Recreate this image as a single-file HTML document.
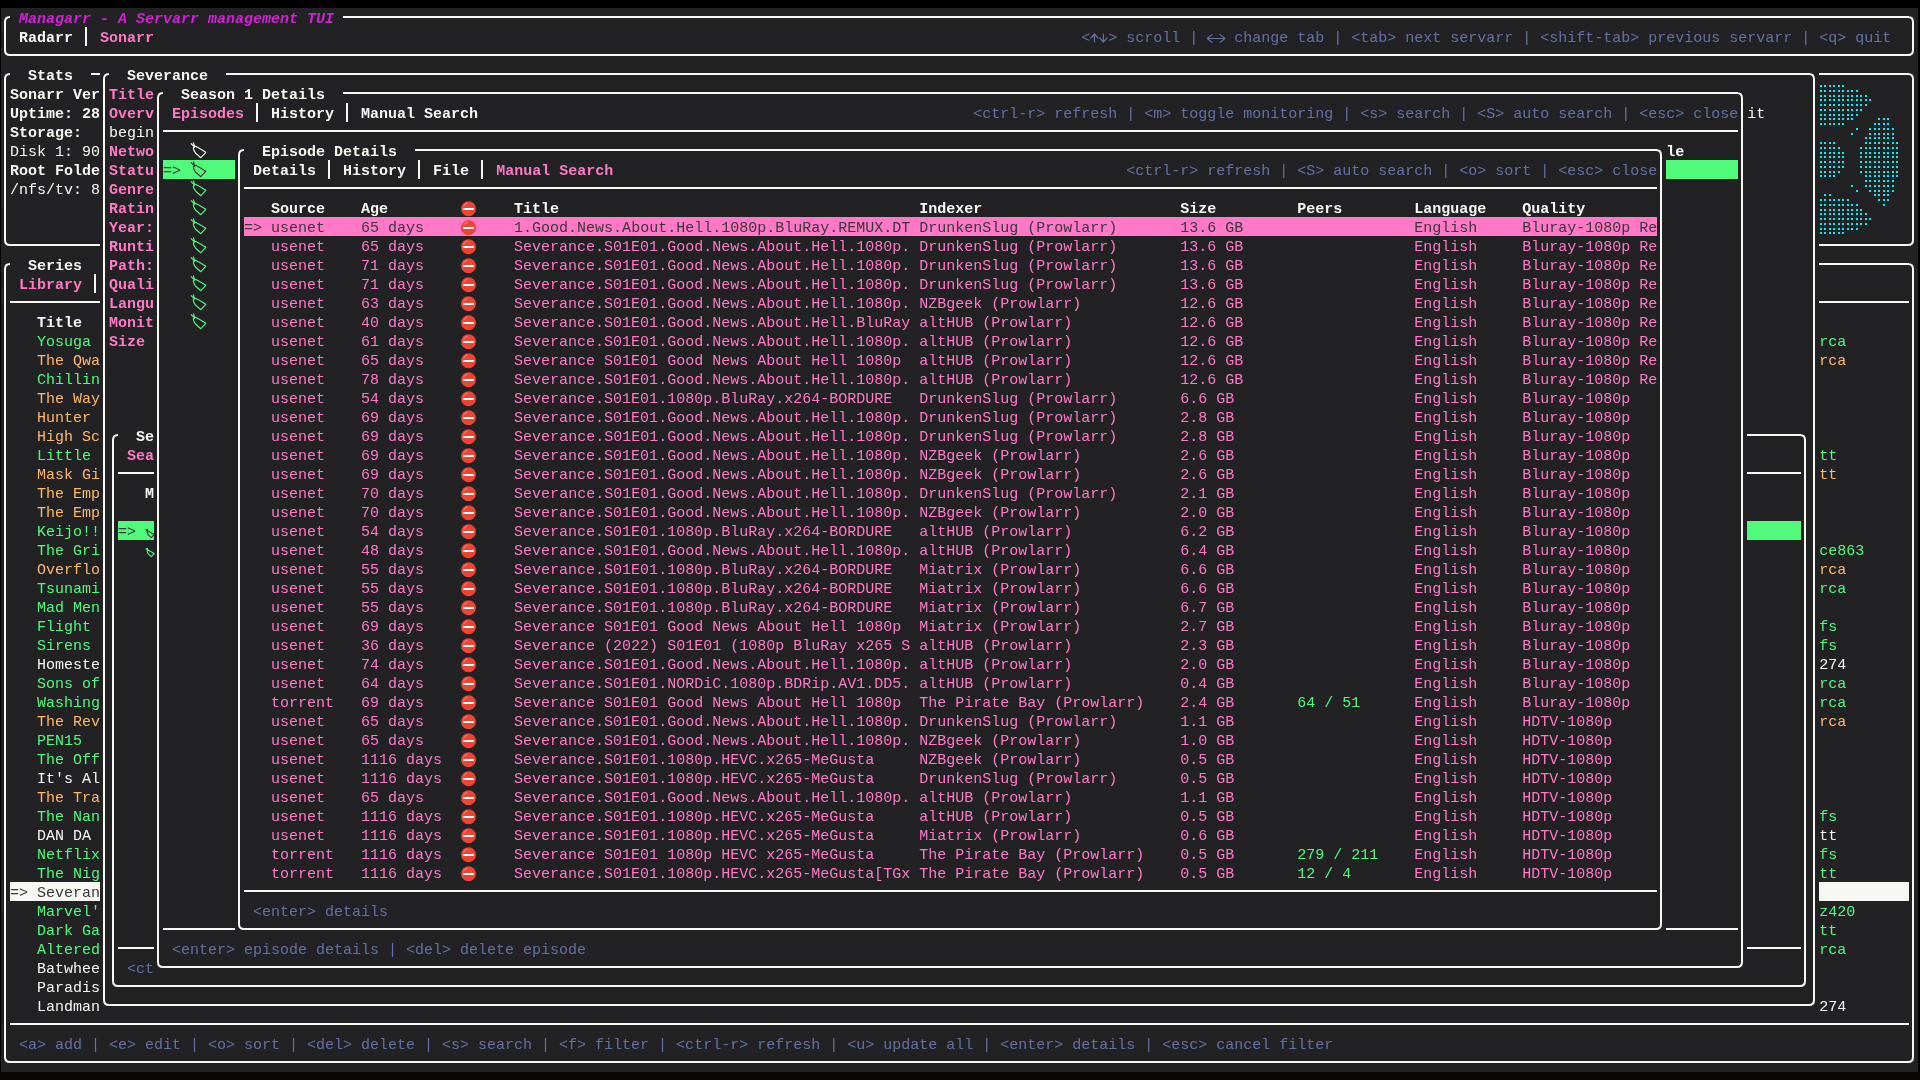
<!DOCTYPE html><html><head><meta charset="utf-8"><style>
html,body{margin:0;padding:0;}body{width:1920px;height:1080px;background:#000;position:relative;overflow:hidden;}
#t{position:absolute;left:1px;top:8px;width:1917px;height:1064px;background:#222225;}
.r{will-change:transform;position:absolute;left:1px;height:19px;font-family:"Liberation Mono",monospace;font-size:15px;line-height:19px;white-space:pre;}
.b{font-weight:bold}.i{font-style:italic}
.bg{position:absolute;height:19px}
svg{position:absolute;left:0;top:0}
#bs{position:absolute;left:0;top:1072px;width:1920px;height:8px;background:#0c0707}
</style></head><body><div id="bs"></div><div id="t"></div>
<div class="bg" style="left:163px;top:160px;width:72px;background:#50fa7b"></div>
<div class="bg" style="left:1666px;top:160px;width:72px;background:#50fa7b"></div>
<div class="bg" style="left:244px;top:217px;width:1413px;background:#ff79c6"></div>
<div class="bg" style="left:118px;top:521px;width:36px;background:#50fa7b"></div>
<div class="bg" style="left:1747px;top:521px;width:54px;background:#50fa7b"></div>
<div class="bg" style="left:10px;top:882px;width:90px;background:#f8f8f2"></div>
<div class="bg" style="left:1819px;top:882px;width:90px;background:#f8f8f2"></div>
<div class="r" style="top:10px">  <span class="b i" style="color:#d41ed8">Managarr - A Servarr management TUI                                                                                                                                                                                </span></div>
<div class="r" style="top:29px">  <span class="b" style="color:#f8f8f2">Radarr   </span><span class="b" style="color:#ff79c6">Sonarr                                                                                                       </span><span style="color:#6272a4">&lt;  &gt; scroll |    change tab | &lt;tab&gt; next servarr | &lt;shift-tab&gt; previous servarr | &lt;q&gt; quit   </span></div>
<div class="r" style="top:67px">   <span class="b" style="color:#f8f8f2">Stats      Severance                                                                                                                                                                                              </span></div>
<div class="r" style="top:86px"> <span class="b" style="color:#f8f8f2">Sonarr Ver </span><span class="b" style="color:#ff79c6">Title   </span><span class="b" style="color:#f8f8f2">Season 1 Details                                                                                                                                                                                 </span></div>
<div class="r" style="top:105px"> <span class="b" style="color:#f8f8f2">Uptime: 28 </span><span class="b" style="color:#ff79c6">Overv  Episodes   </span><span class="b" style="color:#f8f8f2">History   Manual Search                                                       </span><span style="color:#6272a4">&lt;ctrl-r&gt; refresh | &lt;m&gt; toggle monitoring | &lt;s&gt; search | &lt;S&gt; auto search | &lt;esc&gt; close </span><span style="color:#f8f8f2">it                 </span></div>
<div class="r" style="top:124px"> <span class="b" style="color:#f8f8f2">Storage:   </span><span style="color:#f8f8f2">begin                                                                                                                                                                                                    </span></div>
<div class="r" style="top:143px"> <span style="color:#f8f8f2">Disk 1: 90 </span><span class="b" style="color:#ff79c6">Netwo            </span><span class="b" style="color:#f8f8f2">Episode Details                                                                                                                                             le                          </span></div>
<div class="r" style="top:162px"> <span class="b" style="color:#f8f8f2">Root Folde </span><span class="b" style="color:#ff79c6">Statu </span><span style="color:#38383a">=&gt;        </span><span class="b" style="color:#f8f8f2">Details   History   File   </span><span class="b" style="color:#ff79c6">Manual Search                                                         </span><span style="color:#6272a4">&lt;ctrl-r&gt; refresh | &lt;S&gt; auto search | &lt;o&gt; sort | &lt;esc&gt; close                             </span></div>
<div class="r" style="top:181px"> <span style="color:#f8f8f2">/nfs/tv: 8 </span><span class="b" style="color:#ff79c6">Genre                                                                                                                                                                                                    </span></div>
<div class="r" style="top:200px">            <span class="b" style="color:#ff79c6">Ratin             </span><span class="b" style="color:#f8f8f2">Source    Age              Title                                        Indexer                      Size         Peers        Language    Quality                                     </span></div>
<div class="r" style="top:219px">            <span class="b" style="color:#ff79c6">Year:          </span><span style="color:#38383a">=&gt; usenet    65 days          1.Good.News.About.Hell.1080p.BluRay.REMUX.DT DrunkenSlug (Prowlarr)       13.6 GB                   English     Bluray-1080p Re                             </span></div>
<div class="r" style="top:238px">            <span class="b" style="color:#ff79c6">Runti             </span><span style="color:#ff79c6">usenet    65 days          Severance.S01E01.Good.News.About.Hell.1080p. DrunkenSlug (Prowlarr)       13.6 GB                   English     Bluray-1080p Re                             </span></div>
<div class="r" style="top:257px">   <span class="b" style="color:#f8f8f2">Series   </span><span class="b" style="color:#ff79c6">Path:             </span><span style="color:#ff79c6">usenet    71 days          Severance.S01E01.Good.News.About.Hell.1080p. DrunkenSlug (Prowlarr)       13.6 GB                   English     Bluray-1080p Re                             </span></div>
<div class="r" style="top:276px">  <span class="b" style="color:#ff79c6">Library   Quali             </span><span style="color:#ff79c6">usenet    71 days          Severance.S01E01.Good.News.About.Hell.1080p. DrunkenSlug (Prowlarr)       13.6 GB                   English     Bluray-1080p Re                             </span></div>
<div class="r" style="top:295px">            <span class="b" style="color:#ff79c6">Langu             </span><span style="color:#ff79c6">usenet    63 days          Severance.S01E01.Good.News.About.Hell.1080p. NZBgeek (Prowlarr)           12.6 GB                   English     Bluray-1080p Re                             </span></div>
<div class="r" style="top:314px">    <span class="b" style="color:#f8f8f2">Title   </span><span class="b" style="color:#ff79c6">Monit             </span><span style="color:#ff79c6">usenet    40 days          Severance.S01E01.Good.News.About.Hell.BluRay altHUB (Prowlarr)            12.6 GB                   English     Bluray-1080p Re                             </span></div>
<div class="r" style="top:333px">    <span style="color:#50fa7b">Yosuga  </span><span class="b" style="color:#ff79c6">Size              </span><span style="color:#ff79c6">usenet    61 days          Severance.S01E01.Good.News.About.Hell.1080p. altHUB (Prowlarr)            12.6 GB                   English     Bluray-1080p Re                  </span><span style="color:#50fa7b">rca        </span></div>
<div class="r" style="top:352px">    <span style="color:#ffb86c">The Qwa                   </span><span style="color:#ff79c6">usenet    65 days          Severance S01E01 Good News About Hell 1080p  altHUB (Prowlarr)            12.6 GB                   English     Bluray-1080p Re                  </span><span style="color:#ffb86c">rca        </span></div>
<div class="r" style="top:371px">    <span style="color:#50fa7b">Chillin                   </span><span style="color:#ff79c6">usenet    78 days          Severance.S01E01.Good.News.About.Hell.1080p. altHUB (Prowlarr)            12.6 GB                   English     Bluray-1080p Re                             </span></div>
<div class="r" style="top:390px">    <span style="color:#ffb86c">The Way                   </span><span style="color:#ff79c6">usenet    54 days          Severance.S01E01.1080p.BluRay.x264-BORDURE   DrunkenSlug (Prowlarr)       6.6 GB                    English     Bluray-1080p                                </span></div>
<div class="r" style="top:409px">    <span style="color:#ffb86c">Hunter                    </span><span style="color:#ff79c6">usenet    69 days          Severance.S01E01.Good.News.About.Hell.1080p. DrunkenSlug (Prowlarr)       2.8 GB                    English     Bluray-1080p                                </span></div>
<div class="r" style="top:428px">    <span style="color:#ffb86c">High Sc    </span><span class="b" style="color:#f8f8f2">Se             </span><span style="color:#ff79c6">usenet    69 days          Severance.S01E01.Good.News.About.Hell.1080p. DrunkenSlug (Prowlarr)       2.8 GB                    English     Bluray-1080p                                </span></div>
<div class="r" style="top:447px">    <span style="color:#50fa7b">Little    </span><span class="b" style="color:#ff79c6">Sea             </span><span style="color:#ff79c6">usenet    69 days          Severance.S01E01.Good.News.About.Hell.1080p. NZBgeek (Prowlarr)           2.6 GB                    English     Bluray-1080p                     </span><span style="color:#50fa7b">tt         </span></div>
<div class="r" style="top:466px">    <span style="color:#ffb86c">Mask Gi                   </span><span style="color:#ff79c6">usenet    69 days          Severance.S01E01.Good.News.About.Hell.1080p. NZBgeek (Prowlarr)           2.6 GB                    English     Bluray-1080p                     </span><span style="color:#ffb86c">tt         </span></div>
<div class="r" style="top:485px">    <span style="color:#ffb86c">The Emp     </span><span class="b" style="color:#f8f8f2">M             </span><span style="color:#ff79c6">usenet    70 days          Severance.S01E01.Good.News.About.Hell.1080p. DrunkenSlug (Prowlarr)       2.1 GB                    English     Bluray-1080p                                </span></div>
<div class="r" style="top:504px">    <span style="color:#ffb86c">The Emp                   </span><span style="color:#ff79c6">usenet    70 days          Severance.S01E01.Good.News.About.Hell.1080p. NZBgeek (Prowlarr)           2.0 GB                    English     Bluray-1080p                                </span></div>
<div class="r" style="top:523px">    <span style="color:#50fa7b">Keijo!!  </span><span style="color:#38383a">=&gt;               </span><span style="color:#ff79c6">usenet    54 days          Severance.S01E01.1080p.BluRay.x264-BORDURE   altHUB (Prowlarr)            6.2 GB                    English     Bluray-1080p                                </span></div>
<div class="r" style="top:542px">    <span style="color:#50fa7b">The Gri                   </span><span style="color:#ff79c6">usenet    48 days          Severance.S01E01.Good.News.About.Hell.1080p. altHUB (Prowlarr)            6.4 GB                    English     Bluray-1080p                     </span><span style="color:#50fa7b">ce863      </span></div>
<div class="r" style="top:561px">    <span style="color:#ffb86c">Overflo                   </span><span style="color:#ff79c6">usenet    55 days          Severance.S01E01.1080p.BluRay.x264-BORDURE   Miatrix (Prowlarr)           6.6 GB                    English     Bluray-1080p                     </span><span style="color:#ffb86c">rca        </span></div>
<div class="r" style="top:580px">    <span style="color:#50fa7b">Tsunami                   </span><span style="color:#ff79c6">usenet    55 days          Severance.S01E01.1080p.BluRay.x264-BORDURE   Miatrix (Prowlarr)           6.6 GB                    English     Bluray-1080p                     </span><span style="color:#50fa7b">rca        </span></div>
<div class="r" style="top:599px">    <span style="color:#50fa7b">Mad Men                   </span><span style="color:#ff79c6">usenet    55 days          Severance.S01E01.1080p.BluRay.x264-BORDURE   Miatrix (Prowlarr)           6.7 GB                    English     Bluray-1080p                                </span></div>
<div class="r" style="top:618px">    <span style="color:#50fa7b">Flight                    </span><span style="color:#ff79c6">usenet    69 days          Severance S01E01 Good News About Hell 1080p  Miatrix (Prowlarr)           2.7 GB                    English     Bluray-1080p                     </span><span style="color:#50fa7b">fs         </span></div>
<div class="r" style="top:637px">    <span style="color:#50fa7b">Sirens                    </span><span style="color:#ff79c6">usenet    36 days          Severance (2022) S01E01 (1080p BluRay x265 S altHUB (Prowlarr)            2.3 GB                    English     Bluray-1080p                     </span><span style="color:#50fa7b">fs         </span></div>
<div class="r" style="top:656px">    <span style="color:#f8f8f2">Homeste                   </span><span style="color:#ff79c6">usenet    74 days          Severance.S01E01.Good.News.About.Hell.1080p. altHUB (Prowlarr)            2.0 GB                    English     Bluray-1080p                     </span><span style="color:#f8f8f2">274        </span></div>
<div class="r" style="top:675px">    <span style="color:#50fa7b">Sons of                   </span><span style="color:#ff79c6">usenet    64 days          Severance.S01E01.NORDiC.1080p.BDRip.AV1.DD5. altHUB (Prowlarr)            0.4 GB                    English     Bluray-1080p                     </span><span style="color:#50fa7b">rca        </span></div>
<div class="r" style="top:694px">    <span style="color:#50fa7b">Washing                   </span><span style="color:#ff79c6">torrent   69 days          Severance S01E01 Good News About Hell 1080p  The Pirate Bay (Prowlarr)    2.4 GB       </span><span style="color:#50fa7b">64 / 51      </span><span style="color:#ff79c6">English     Bluray-1080p                     </span><span style="color:#50fa7b">rca        </span></div>
<div class="r" style="top:713px">    <span style="color:#ffb86c">The Rev                   </span><span style="color:#ff79c6">usenet    65 days          Severance.S01E01.Good.News.About.Hell.1080p. DrunkenSlug (Prowlarr)       1.1 GB                    English     HDTV-1080p                       </span><span style="color:#ffb86c">rca        </span></div>
<div class="r" style="top:732px">    <span style="color:#50fa7b">PEN15                     </span><span style="color:#ff79c6">usenet    65 days          Severance.S01E01.Good.News.About.Hell.1080p. NZBgeek (Prowlarr)           1.0 GB                    English     HDTV-1080p                                  </span></div>
<div class="r" style="top:751px">    <span style="color:#50fa7b">The Off                   </span><span style="color:#ff79c6">usenet    1116 days        Severance.S01E01.1080p.HEVC.x265-MeGusta     NZBgeek (Prowlarr)           0.5 GB                    English     HDTV-1080p                                  </span></div>
<div class="r" style="top:770px">    <span style="color:#f8f8f2">It&#x27;s Al                   </span><span style="color:#ff79c6">usenet    1116 days        Severance.S01E01.1080p.HEVC.x265-MeGusta     DrunkenSlug (Prowlarr)       0.5 GB                    English     HDTV-1080p                                  </span></div>
<div class="r" style="top:789px">    <span style="color:#ffb86c">The Tra                   </span><span style="color:#ff79c6">usenet    65 days          Severance.S01E01.Good.News.About.Hell.1080p. altHUB (Prowlarr)            1.1 GB                    English     HDTV-1080p                                  </span></div>
<div class="r" style="top:808px">    <span style="color:#50fa7b">The Nan                   </span><span style="color:#ff79c6">usenet    1116 days        Severance.S01E01.1080p.HEVC.x265-MeGusta     altHUB (Prowlarr)            0.5 GB                    English     HDTV-1080p                       </span><span style="color:#50fa7b">fs         </span></div>
<div class="r" style="top:827px">    <span style="color:#f8f8f2">DAN DA                    </span><span style="color:#ff79c6">usenet    1116 days        Severance.S01E01.1080p.HEVC.x265-MeGusta     Miatrix (Prowlarr)           0.6 GB                    English     HDTV-1080p                       </span><span style="color:#f8f8f2">tt         </span></div>
<div class="r" style="top:846px">    <span style="color:#50fa7b">Netflix                   </span><span style="color:#ff79c6">torrent   1116 days        Severance S01E01 1080p HEVC x265-MeGusta     The Pirate Bay (Prowlarr)    0.5 GB       </span><span style="color:#50fa7b">279 / 211    </span><span style="color:#ff79c6">English     HDTV-1080p                       </span><span style="color:#50fa7b">fs         </span></div>
<div class="r" style="top:865px">    <span style="color:#50fa7b">The Nig                   </span><span style="color:#ff79c6">torrent   1116 days        Severance.S01E01.1080p.HEVC.x265-MeGusta[TGx The Pirate Bay (Prowlarr)    0.5 GB       </span><span style="color:#50fa7b">12 / 4       </span><span style="color:#ff79c6">English     HDTV-1080p                       </span><span style="color:#50fa7b">tt         </span></div>
<div class="r" style="top:884px"> <span style="color:#38383a">=&gt; Severan                                                                                                                                                                                                          </span></div>
<div class="r" style="top:903px">    <span style="color:#50fa7b">Marvel&#x27;                 </span><span style="color:#6272a4">&lt;enter&gt; details                                                                                                                                                               </span><span style="color:#50fa7b">z420       </span></div>
<div class="r" style="top:922px">    <span style="color:#50fa7b">Dark Ga                                                                                                                                                                                               tt         </span></div>
<div class="r" style="top:941px">    <span style="color:#50fa7b">Altered        </span><span style="color:#6272a4">&lt;enter&gt; episode details | &lt;del&gt; delete episode                                                                                                                                         </span><span style="color:#50fa7b">rca        </span></div>
<div class="r" style="top:960px">    <span style="color:#f8f8f2">Batwhee   </span><span style="color:#6272a4">&lt;ct                                                                                                                                                                                                    </span></div>
<div class="r" style="top:979px">    <span style="color:#f8f8f2">Paradis                                                                                                                                                                                                          </span></div>
<div class="r" style="top:998px">    <span style="color:#f8f8f2">Landman                                                                                                                                                                                               274        </span></div>
<div class="r" style="top:1036px">  <span style="color:#6272a4">&lt;a&gt; add | &lt;e&gt; edit | &lt;o&gt; sort | &lt;del&gt; delete | &lt;s&gt; search | &lt;f&gt; filter | &lt;ctrl-r&gt; refresh | &lt;u&gt; update all | &lt;enter&gt; details | &lt;esc&gt; cancel filter                                                                 </span></div>
<svg width="1920" height="1080"><g fill="#f8f8f2"><rect x="343" y="16" width="1566" height="2"/><rect x="10" y="54" width="1899" height="2"/><rect x="91" y="73" width="9" height="2"/><rect x="226" y="73" width="1584" height="2"/><rect x="1819" y="73" width="90" height="2"/><rect x="343" y="92" width="1395" height="2"/><rect x="163" y="130" width="1575" height="2"/><rect x="415" y="149" width="1242" height="2"/><rect x="244" y="187" width="1413" height="2"/><rect x="10" y="244" width="90" height="2"/><rect x="1819" y="244" width="90" height="2"/><rect x="1819" y="263" width="90" height="2"/><rect x="10" y="301" width="90" height="2"/><rect x="1819" y="301" width="90" height="2"/><rect x="1747" y="434" width="54" height="2"/><rect x="118" y="472" width="36" height="2"/><rect x="1747" y="472" width="54" height="2"/><rect x="244" y="890" width="1413" height="2"/><rect x="163" y="928" width="72" height="2"/><rect x="244" y="928" width="1413" height="2"/><rect x="1666" y="928" width="72" height="2"/><rect x="118" y="947" width="36" height="2"/><rect x="1747" y="947" width="54" height="2"/><rect x="163" y="966" width="1575" height="2"/><rect x="118" y="985" width="1683" height="2"/><rect x="109" y="1004" width="1701" height="2"/><rect x="10" y="1023" width="1899" height="2"/><rect x="10" y="1061" width="1899" height="2"/><rect x="4" y="27" width="2" height="19"/><rect x="4" y="84" width="2" height="152"/><rect x="4" y="274" width="2" height="779"/><rect x="85" y="27" width="2" height="19"/><rect x="94" y="274" width="2" height="19"/><rect x="103" y="84" width="2" height="912"/><rect x="112" y="445" width="2" height="532"/><rect x="157" y="103" width="2" height="855"/><rect x="238" y="160" width="2" height="760"/><rect x="256" y="103" width="2" height="19"/><rect x="328" y="160" width="2" height="19"/><rect x="346" y="103" width="2" height="19"/><rect x="418" y="160" width="2" height="19"/><rect x="481" y="160" width="2" height="19"/><rect x="1660" y="160" width="2" height="760"/><rect x="1741" y="103" width="2" height="855"/><rect x="1804" y="445" width="2" height="532"/><rect x="1813" y="84" width="2" height="912"/><rect x="1912" y="27" width="2" height="19"/><rect x="1912" y="84" width="2" height="152"/><rect x="1912" y="274" width="2" height="779"/></g><path fill="none" stroke="#f8f8f2" stroke-width="2" d="M5 27 V22 Q5 17 10 17 H10 M1909 17 H1908 Q1913 17 1913 22 V27 M5 46 V50 Q5 55 10 55 H10 M1909 55 H1908 Q1913 55 1913 50 V46 M5 84 V79 Q5 74 10 74 H10 M104 84 V79 Q104 74 109 74 H109 M1810 74 H1809 Q1814 74 1814 79 V84 M1909 74 H1908 Q1913 74 1913 79 V84 M158 103 V98 Q158 93 163 93 H163 M1738 93 H1737 Q1742 93 1742 98 V103 M239 160 V155 Q239 150 244 150 H244 M1657 150 H1656 Q1661 150 1661 155 V160 M5 236 V240 Q5 245 10 245 H10 M1909 245 H1908 Q1913 245 1913 240 V236 M5 274 V269 Q5 264 10 264 H10 M1909 264 H1908 Q1913 264 1913 269 V274 M113 445 V440 Q113 435 118 435 H118 M1801 435 H1800 Q1805 435 1805 440 V445 M239 920 V924 Q239 929 244 929 H244 M1657 929 H1656 Q1661 929 1661 924 V920 M158 958 V962 Q158 967 163 967 H163 M1738 967 H1737 Q1742 967 1742 962 V958 M113 977 V981 Q113 986 118 986 H118 M1801 986 H1800 Q1805 986 1805 981 V977 M104 996 V1000 Q104 1005 109 1005 H109 M1810 1005 H1809 Q1814 1005 1814 1000 V996 M5 1053 V1057 Q5 1062 10 1062 H10 M1909 1062 H1908 Q1913 1062 1913 1057 V1053"/><path d="M1094.4 34 V42 M1090.9 38 L1094.4 34 L1097.9 38" stroke="#6272a4" stroke-width="1.2" fill="none" stroke-linecap="round"/><path d="M1103.4 34 V42 M1099.9 38 L1103.4 42 L1106.9 38" stroke="#6272a4" stroke-width="1.2" fill="none" stroke-linecap="round"/><path d="M1207.3 38.5 H1224.9 M1207.3 38.5 l4.7 -3.9 M1207.3 38.5 l4.7 3.9 M1224.9 38.5 l-4.7 -3.9 M1224.9 38.5 l-4.7 3.9" stroke="#6272a4" stroke-width="1.2" fill="none" stroke-linecap="round"/><g transform="translate(190 141)" fill="none" stroke="#f8f8f2" stroke-width="1.15" stroke-linejoin="round"><path d="M5.5 5.3 Q10 7.5 15.8 11.3 L10.8 16.7 L5.5 12 Q3.5 9.5 3.3 7 Z"/><path d="M0.8 2.3 L4.7 6 M3.3 1.5 L4.7 5.8"/></g><g transform="translate(190 160)" fill="none" stroke="#38383a" stroke-width="1.15" stroke-linejoin="round"><path d="M5.5 5.3 Q10 7.5 15.8 11.3 L10.8 16.7 L5.5 12 Q3.5 9.5 3.3 7 Z"/><path d="M0.8 2.3 L4.7 6 M3.3 1.5 L4.7 5.8"/></g><g transform="translate(190 179)" fill="none" stroke="#50fa7b" stroke-width="1.15" stroke-linejoin="round"><path d="M5.5 5.3 Q10 7.5 15.8 11.3 L10.8 16.7 L5.5 12 Q3.5 9.5 3.3 7 Z"/><path d="M0.8 2.3 L4.7 6 M3.3 1.5 L4.7 5.8"/></g><g transform="translate(190 198)" fill="none" stroke="#50fa7b" stroke-width="1.15" stroke-linejoin="round"><path d="M5.5 5.3 Q10 7.5 15.8 11.3 L10.8 16.7 L5.5 12 Q3.5 9.5 3.3 7 Z"/><path d="M0.8 2.3 L4.7 6 M3.3 1.5 L4.7 5.8"/></g><circle cx="468.5" cy="208.7" r="7.5" fill="#ef4433"/><rect x="463" y="208" width="11" height="2" fill="#fff"/><path d="M463.6 206.3 A5.3 5.3 0 0 1 467.6 203.1" stroke="#ff9c92" stroke-width="0.9" fill="none" opacity="0.8"/><g transform="translate(190 217)" fill="none" stroke="#50fa7b" stroke-width="1.15" stroke-linejoin="round"><path d="M5.5 5.3 Q10 7.5 15.8 11.3 L10.8 16.7 L5.5 12 Q3.5 9.5 3.3 7 Z"/><path d="M0.8 2.3 L4.7 6 M3.3 1.5 L4.7 5.8"/></g><circle cx="468.5" cy="227.7" r="7.5" fill="#ef4433"/><rect x="463" y="227" width="11" height="2" fill="#fff"/><path d="M463.6 225.3 A5.3 5.3 0 0 1 467.6 222.1" stroke="#ff9c92" stroke-width="0.9" fill="none" opacity="0.8"/><g transform="translate(190 236)" fill="none" stroke="#50fa7b" stroke-width="1.15" stroke-linejoin="round"><path d="M5.5 5.3 Q10 7.5 15.8 11.3 L10.8 16.7 L5.5 12 Q3.5 9.5 3.3 7 Z"/><path d="M0.8 2.3 L4.7 6 M3.3 1.5 L4.7 5.8"/></g><circle cx="468.5" cy="246.7" r="7.5" fill="#ef4433"/><rect x="463" y="246" width="11" height="2" fill="#fff"/><path d="M463.6 244.3 A5.3 5.3 0 0 1 467.6 241.1" stroke="#ff9c92" stroke-width="0.9" fill="none" opacity="0.8"/><g transform="translate(190 255)" fill="none" stroke="#50fa7b" stroke-width="1.15" stroke-linejoin="round"><path d="M5.5 5.3 Q10 7.5 15.8 11.3 L10.8 16.7 L5.5 12 Q3.5 9.5 3.3 7 Z"/><path d="M0.8 2.3 L4.7 6 M3.3 1.5 L4.7 5.8"/></g><circle cx="468.5" cy="265.7" r="7.5" fill="#ef4433"/><rect x="463" y="265" width="11" height="2" fill="#fff"/><path d="M463.6 263.3 A5.3 5.3 0 0 1 467.6 260.1" stroke="#ff9c92" stroke-width="0.9" fill="none" opacity="0.8"/><g transform="translate(190 274)" fill="none" stroke="#50fa7b" stroke-width="1.15" stroke-linejoin="round"><path d="M5.5 5.3 Q10 7.5 15.8 11.3 L10.8 16.7 L5.5 12 Q3.5 9.5 3.3 7 Z"/><path d="M0.8 2.3 L4.7 6 M3.3 1.5 L4.7 5.8"/></g><circle cx="468.5" cy="284.7" r="7.5" fill="#ef4433"/><rect x="463" y="284" width="11" height="2" fill="#fff"/><path d="M463.6 282.3 A5.3 5.3 0 0 1 467.6 279.1" stroke="#ff9c92" stroke-width="0.9" fill="none" opacity="0.8"/><g transform="translate(190 293)" fill="none" stroke="#50fa7b" stroke-width="1.15" stroke-linejoin="round"><path d="M5.5 5.3 Q10 7.5 15.8 11.3 L10.8 16.7 L5.5 12 Q3.5 9.5 3.3 7 Z"/><path d="M0.8 2.3 L4.7 6 M3.3 1.5 L4.7 5.8"/></g><circle cx="468.5" cy="303.7" r="7.5" fill="#ef4433"/><rect x="463" y="303" width="11" height="2" fill="#fff"/><path d="M463.6 301.3 A5.3 5.3 0 0 1 467.6 298.1" stroke="#ff9c92" stroke-width="0.9" fill="none" opacity="0.8"/><g transform="translate(190 312)" fill="none" stroke="#50fa7b" stroke-width="1.15" stroke-linejoin="round"><path d="M5.5 5.3 Q10 7.5 15.8 11.3 L10.8 16.7 L5.5 12 Q3.5 9.5 3.3 7 Z"/><path d="M0.8 2.3 L4.7 6 M3.3 1.5 L4.7 5.8"/></g><circle cx="468.5" cy="322.7" r="7.5" fill="#ef4433"/><rect x="463" y="322" width="11" height="2" fill="#fff"/><path d="M463.6 320.3 A5.3 5.3 0 0 1 467.6 317.1" stroke="#ff9c92" stroke-width="0.9" fill="none" opacity="0.8"/><circle cx="468.5" cy="341.7" r="7.5" fill="#ef4433"/><rect x="463" y="341" width="11" height="2" fill="#fff"/><path d="M463.6 339.3 A5.3 5.3 0 0 1 467.6 336.1" stroke="#ff9c92" stroke-width="0.9" fill="none" opacity="0.8"/><circle cx="468.5" cy="360.7" r="7.5" fill="#ef4433"/><rect x="463" y="360" width="11" height="2" fill="#fff"/><path d="M463.6 358.3 A5.3 5.3 0 0 1 467.6 355.1" stroke="#ff9c92" stroke-width="0.9" fill="none" opacity="0.8"/><circle cx="468.5" cy="379.7" r="7.5" fill="#ef4433"/><rect x="463" y="379" width="11" height="2" fill="#fff"/><path d="M463.6 377.3 A5.3 5.3 0 0 1 467.6 374.1" stroke="#ff9c92" stroke-width="0.9" fill="none" opacity="0.8"/><circle cx="468.5" cy="398.7" r="7.5" fill="#ef4433"/><rect x="463" y="398" width="11" height="2" fill="#fff"/><path d="M463.6 396.3 A5.3 5.3 0 0 1 467.6 393.1" stroke="#ff9c92" stroke-width="0.9" fill="none" opacity="0.8"/><circle cx="468.5" cy="417.7" r="7.5" fill="#ef4433"/><rect x="463" y="417" width="11" height="2" fill="#fff"/><path d="M463.6 415.3 A5.3 5.3 0 0 1 467.6 412.1" stroke="#ff9c92" stroke-width="0.9" fill="none" opacity="0.8"/><circle cx="468.5" cy="436.7" r="7.5" fill="#ef4433"/><rect x="463" y="436" width="11" height="2" fill="#fff"/><path d="M463.6 434.3 A5.3 5.3 0 0 1 467.6 431.1" stroke="#ff9c92" stroke-width="0.9" fill="none" opacity="0.8"/><circle cx="468.5" cy="455.7" r="7.5" fill="#ef4433"/><rect x="463" y="455" width="11" height="2" fill="#fff"/><path d="M463.6 453.3 A5.3 5.3 0 0 1 467.6 450.1" stroke="#ff9c92" stroke-width="0.9" fill="none" opacity="0.8"/><circle cx="468.5" cy="474.7" r="7.5" fill="#ef4433"/><rect x="463" y="474" width="11" height="2" fill="#fff"/><path d="M463.6 472.3 A5.3 5.3 0 0 1 467.6 469.1" stroke="#ff9c92" stroke-width="0.9" fill="none" opacity="0.8"/><circle cx="468.5" cy="493.7" r="7.5" fill="#ef4433"/><rect x="463" y="493" width="11" height="2" fill="#fff"/><path d="M463.6 491.3 A5.3 5.3 0 0 1 467.6 488.1" stroke="#ff9c92" stroke-width="0.9" fill="none" opacity="0.8"/><circle cx="468.5" cy="512.7" r="7.5" fill="#ef4433"/><rect x="463" y="512" width="11" height="2" fill="#fff"/><path d="M463.6 510.3 A5.3 5.3 0 0 1 467.6 507.1" stroke="#ff9c92" stroke-width="0.9" fill="none" opacity="0.8"/><g transform="translate(145.3 528.2) scale(0.56)" fill="none" stroke="#38383a" stroke-width="2" stroke-linejoin="round"><path d="M5.5 5.3 Q10 7.5 15.8 11.3 L10.8 16.7 L5.5 12 Q3.5 9.5 3.3 7 Z"/><path d="M0.8 2.3 L4.7 6 M3.3 1.5 L4.7 5.8"/></g><circle cx="468.5" cy="531.7" r="7.5" fill="#ef4433"/><rect x="463" y="531" width="11" height="2" fill="#fff"/><path d="M463.6 529.3 A5.3 5.3 0 0 1 467.6 526.1" stroke="#ff9c92" stroke-width="0.9" fill="none" opacity="0.8"/><g transform="translate(145.3 547.2) scale(0.56)" fill="none" stroke="#50fa7b" stroke-width="2" stroke-linejoin="round"><path d="M5.5 5.3 Q10 7.5 15.8 11.3 L10.8 16.7 L5.5 12 Q3.5 9.5 3.3 7 Z"/><path d="M0.8 2.3 L4.7 6 M3.3 1.5 L4.7 5.8"/></g><circle cx="468.5" cy="550.7" r="7.5" fill="#ef4433"/><rect x="463" y="550" width="11" height="2" fill="#fff"/><path d="M463.6 548.3 A5.3 5.3 0 0 1 467.6 545.1" stroke="#ff9c92" stroke-width="0.9" fill="none" opacity="0.8"/><circle cx="468.5" cy="569.7" r="7.5" fill="#ef4433"/><rect x="463" y="569" width="11" height="2" fill="#fff"/><path d="M463.6 567.3 A5.3 5.3 0 0 1 467.6 564.1" stroke="#ff9c92" stroke-width="0.9" fill="none" opacity="0.8"/><circle cx="468.5" cy="588.7" r="7.5" fill="#ef4433"/><rect x="463" y="588" width="11" height="2" fill="#fff"/><path d="M463.6 586.3 A5.3 5.3 0 0 1 467.6 583.1" stroke="#ff9c92" stroke-width="0.9" fill="none" opacity="0.8"/><circle cx="468.5" cy="607.7" r="7.5" fill="#ef4433"/><rect x="463" y="607" width="11" height="2" fill="#fff"/><path d="M463.6 605.3 A5.3 5.3 0 0 1 467.6 602.1" stroke="#ff9c92" stroke-width="0.9" fill="none" opacity="0.8"/><circle cx="468.5" cy="626.7" r="7.5" fill="#ef4433"/><rect x="463" y="626" width="11" height="2" fill="#fff"/><path d="M463.6 624.3 A5.3 5.3 0 0 1 467.6 621.1" stroke="#ff9c92" stroke-width="0.9" fill="none" opacity="0.8"/><circle cx="468.5" cy="645.7" r="7.5" fill="#ef4433"/><rect x="463" y="645" width="11" height="2" fill="#fff"/><path d="M463.6 643.3 A5.3 5.3 0 0 1 467.6 640.1" stroke="#ff9c92" stroke-width="0.9" fill="none" opacity="0.8"/><circle cx="468.5" cy="664.7" r="7.5" fill="#ef4433"/><rect x="463" y="664" width="11" height="2" fill="#fff"/><path d="M463.6 662.3 A5.3 5.3 0 0 1 467.6 659.1" stroke="#ff9c92" stroke-width="0.9" fill="none" opacity="0.8"/><circle cx="468.5" cy="683.7" r="7.5" fill="#ef4433"/><rect x="463" y="683" width="11" height="2" fill="#fff"/><path d="M463.6 681.3 A5.3 5.3 0 0 1 467.6 678.1" stroke="#ff9c92" stroke-width="0.9" fill="none" opacity="0.8"/><circle cx="468.5" cy="702.7" r="7.5" fill="#ef4433"/><rect x="463" y="702" width="11" height="2" fill="#fff"/><path d="M463.6 700.3 A5.3 5.3 0 0 1 467.6 697.1" stroke="#ff9c92" stroke-width="0.9" fill="none" opacity="0.8"/><circle cx="468.5" cy="721.7" r="7.5" fill="#ef4433"/><rect x="463" y="721" width="11" height="2" fill="#fff"/><path d="M463.6 719.3 A5.3 5.3 0 0 1 467.6 716.1" stroke="#ff9c92" stroke-width="0.9" fill="none" opacity="0.8"/><circle cx="468.5" cy="740.7" r="7.5" fill="#ef4433"/><rect x="463" y="740" width="11" height="2" fill="#fff"/><path d="M463.6 738.3 A5.3 5.3 0 0 1 467.6 735.1" stroke="#ff9c92" stroke-width="0.9" fill="none" opacity="0.8"/><circle cx="468.5" cy="759.7" r="7.5" fill="#ef4433"/><rect x="463" y="759" width="11" height="2" fill="#fff"/><path d="M463.6 757.3 A5.3 5.3 0 0 1 467.6 754.1" stroke="#ff9c92" stroke-width="0.9" fill="none" opacity="0.8"/><circle cx="468.5" cy="778.7" r="7.5" fill="#ef4433"/><rect x="463" y="778" width="11" height="2" fill="#fff"/><path d="M463.6 776.3 A5.3 5.3 0 0 1 467.6 773.1" stroke="#ff9c92" stroke-width="0.9" fill="none" opacity="0.8"/><circle cx="468.5" cy="797.7" r="7.5" fill="#ef4433"/><rect x="463" y="797" width="11" height="2" fill="#fff"/><path d="M463.6 795.3 A5.3 5.3 0 0 1 467.6 792.1" stroke="#ff9c92" stroke-width="0.9" fill="none" opacity="0.8"/><circle cx="468.5" cy="816.7" r="7.5" fill="#ef4433"/><rect x="463" y="816" width="11" height="2" fill="#fff"/><path d="M463.6 814.3 A5.3 5.3 0 0 1 467.6 811.1" stroke="#ff9c92" stroke-width="0.9" fill="none" opacity="0.8"/><circle cx="468.5" cy="835.7" r="7.5" fill="#ef4433"/><rect x="463" y="835" width="11" height="2" fill="#fff"/><path d="M463.6 833.3 A5.3 5.3 0 0 1 467.6 830.1" stroke="#ff9c92" stroke-width="0.9" fill="none" opacity="0.8"/><circle cx="468.5" cy="854.7" r="7.5" fill="#ef4433"/><rect x="463" y="854" width="11" height="2" fill="#fff"/><path d="M463.6 852.3 A5.3 5.3 0 0 1 467.6 849.1" stroke="#ff9c92" stroke-width="0.9" fill="none" opacity="0.8"/><circle cx="468.5" cy="873.7" r="7.5" fill="#ef4433"/><rect x="463" y="873" width="11" height="2" fill="#fff"/><path d="M463.6 871.3 A5.3 5.3 0 0 1 467.6 868.1" stroke="#ff9c92" stroke-width="0.9" fill="none" opacity="0.8"/><g fill="#00f0f5"><rect x="1820" y="85" width="2" height="2"/><rect x="1824" y="85" width="2" height="2"/><rect x="1829" y="85" width="2" height="2"/><rect x="1833" y="85" width="2" height="2"/><rect x="1838" y="85" width="2" height="2"/><rect x="1842" y="85" width="2" height="2"/><rect x="1820" y="90" width="2" height="2"/><rect x="1824" y="90" width="2" height="2"/><rect x="1829" y="90" width="2" height="2"/><rect x="1833" y="90" width="2" height="2"/><rect x="1838" y="90" width="2" height="2"/><rect x="1842" y="90" width="2" height="2"/><rect x="1847" y="90" width="2" height="2"/><rect x="1851" y="90" width="2" height="2"/><rect x="1856" y="90" width="2" height="2"/><rect x="1820" y="95" width="2" height="2"/><rect x="1824" y="95" width="2" height="2"/><rect x="1829" y="95" width="2" height="2"/><rect x="1833" y="95" width="2" height="2"/><rect x="1838" y="95" width="2" height="2"/><rect x="1842" y="95" width="2" height="2"/><rect x="1847" y="95" width="2" height="2"/><rect x="1851" y="95" width="2" height="2"/><rect x="1856" y="95" width="2" height="2"/><rect x="1860" y="95" width="2" height="2"/><rect x="1865" y="95" width="2" height="2"/><rect x="1820" y="99" width="2" height="2"/><rect x="1824" y="99" width="2" height="2"/><rect x="1829" y="99" width="2" height="2"/><rect x="1833" y="99" width="2" height="2"/><rect x="1838" y="99" width="2" height="2"/><rect x="1842" y="99" width="2" height="2"/><rect x="1847" y="99" width="2" height="2"/><rect x="1851" y="99" width="2" height="2"/><rect x="1856" y="99" width="2" height="2"/><rect x="1860" y="99" width="2" height="2"/><rect x="1865" y="99" width="2" height="2"/><rect x="1869" y="99" width="2" height="2"/><rect x="1820" y="104" width="2" height="2"/><rect x="1824" y="104" width="2" height="2"/><rect x="1829" y="104" width="2" height="2"/><rect x="1833" y="104" width="2" height="2"/><rect x="1838" y="104" width="2" height="2"/><rect x="1842" y="104" width="2" height="2"/><rect x="1847" y="104" width="2" height="2"/><rect x="1851" y="104" width="2" height="2"/><rect x="1856" y="104" width="2" height="2"/><rect x="1860" y="104" width="2" height="2"/><rect x="1865" y="104" width="2" height="2"/><rect x="1820" y="109" width="2" height="2"/><rect x="1824" y="109" width="2" height="2"/><rect x="1829" y="109" width="2" height="2"/><rect x="1833" y="109" width="2" height="2"/><rect x="1838" y="109" width="2" height="2"/><rect x="1842" y="109" width="2" height="2"/><rect x="1847" y="109" width="2" height="2"/><rect x="1851" y="109" width="2" height="2"/><rect x="1856" y="109" width="2" height="2"/><rect x="1860" y="109" width="2" height="2"/><rect x="1820" y="114" width="2" height="2"/><rect x="1824" y="114" width="2" height="2"/><rect x="1829" y="114" width="2" height="2"/><rect x="1833" y="114" width="2" height="2"/><rect x="1838" y="114" width="2" height="2"/><rect x="1842" y="114" width="2" height="2"/><rect x="1847" y="114" width="2" height="2"/><rect x="1851" y="114" width="2" height="2"/><rect x="1856" y="114" width="2" height="2"/><rect x="1820" y="118" width="2" height="2"/><rect x="1824" y="118" width="2" height="2"/><rect x="1829" y="118" width="2" height="2"/><rect x="1833" y="118" width="2" height="2"/><rect x="1838" y="118" width="2" height="2"/><rect x="1842" y="118" width="2" height="2"/><rect x="1847" y="118" width="2" height="2"/><rect x="1851" y="118" width="2" height="2"/><rect x="1878" y="118" width="2" height="2"/><rect x="1883" y="118" width="2" height="2"/><rect x="1887" y="118" width="2" height="2"/><rect x="1820" y="123" width="2" height="2"/><rect x="1824" y="123" width="2" height="2"/><rect x="1829" y="123" width="2" height="2"/><rect x="1833" y="123" width="2" height="2"/><rect x="1838" y="123" width="2" height="2"/><rect x="1842" y="123" width="2" height="2"/><rect x="1874" y="123" width="2" height="2"/><rect x="1878" y="123" width="2" height="2"/><rect x="1883" y="123" width="2" height="2"/><rect x="1887" y="123" width="2" height="2"/><rect x="1856" y="128" width="2" height="2"/><rect x="1869" y="128" width="2" height="2"/><rect x="1874" y="128" width="2" height="2"/><rect x="1878" y="128" width="2" height="2"/><rect x="1883" y="128" width="2" height="2"/><rect x="1887" y="128" width="2" height="2"/><rect x="1892" y="128" width="2" height="2"/><rect x="1851" y="133" width="2" height="2"/><rect x="1869" y="133" width="2" height="2"/><rect x="1874" y="133" width="2" height="2"/><rect x="1878" y="133" width="2" height="2"/><rect x="1883" y="133" width="2" height="2"/><rect x="1887" y="133" width="2" height="2"/><rect x="1892" y="133" width="2" height="2"/><rect x="1865" y="137" width="2" height="2"/><rect x="1869" y="137" width="2" height="2"/><rect x="1874" y="137" width="2" height="2"/><rect x="1878" y="137" width="2" height="2"/><rect x="1883" y="137" width="2" height="2"/><rect x="1887" y="137" width="2" height="2"/><rect x="1892" y="137" width="2" height="2"/><rect x="1820" y="142" width="2" height="2"/><rect x="1824" y="142" width="2" height="2"/><rect x="1829" y="142" width="2" height="2"/><rect x="1833" y="142" width="2" height="2"/><rect x="1865" y="142" width="2" height="2"/><rect x="1869" y="142" width="2" height="2"/><rect x="1874" y="142" width="2" height="2"/><rect x="1878" y="142" width="2" height="2"/><rect x="1883" y="142" width="2" height="2"/><rect x="1887" y="142" width="2" height="2"/><rect x="1892" y="142" width="2" height="2"/><rect x="1896" y="142" width="2" height="2"/><rect x="1820" y="147" width="2" height="2"/><rect x="1824" y="147" width="2" height="2"/><rect x="1829" y="147" width="2" height="2"/><rect x="1833" y="147" width="2" height="2"/><rect x="1838" y="147" width="2" height="2"/><rect x="1860" y="147" width="2" height="2"/><rect x="1865" y="147" width="2" height="2"/><rect x="1869" y="147" width="2" height="2"/><rect x="1874" y="147" width="2" height="2"/><rect x="1878" y="147" width="2" height="2"/><rect x="1883" y="147" width="2" height="2"/><rect x="1887" y="147" width="2" height="2"/><rect x="1892" y="147" width="2" height="2"/><rect x="1896" y="147" width="2" height="2"/><rect x="1820" y="152" width="2" height="2"/><rect x="1824" y="152" width="2" height="2"/><rect x="1829" y="152" width="2" height="2"/><rect x="1833" y="152" width="2" height="2"/><rect x="1838" y="152" width="2" height="2"/><rect x="1842" y="152" width="2" height="2"/><rect x="1860" y="152" width="2" height="2"/><rect x="1865" y="152" width="2" height="2"/><rect x="1869" y="152" width="2" height="2"/><rect x="1874" y="152" width="2" height="2"/><rect x="1878" y="152" width="2" height="2"/><rect x="1883" y="152" width="2" height="2"/><rect x="1887" y="152" width="2" height="2"/><rect x="1892" y="152" width="2" height="2"/><rect x="1896" y="152" width="2" height="2"/><rect x="1820" y="156" width="2" height="2"/><rect x="1824" y="156" width="2" height="2"/><rect x="1829" y="156" width="2" height="2"/><rect x="1833" y="156" width="2" height="2"/><rect x="1838" y="156" width="2" height="2"/><rect x="1842" y="156" width="2" height="2"/><rect x="1860" y="156" width="2" height="2"/><rect x="1865" y="156" width="2" height="2"/><rect x="1869" y="156" width="2" height="2"/><rect x="1874" y="156" width="2" height="2"/><rect x="1878" y="156" width="2" height="2"/><rect x="1883" y="156" width="2" height="2"/><rect x="1887" y="156" width="2" height="2"/><rect x="1892" y="156" width="2" height="2"/><rect x="1896" y="156" width="2" height="2"/><rect x="1820" y="161" width="2" height="2"/><rect x="1824" y="161" width="2" height="2"/><rect x="1829" y="161" width="2" height="2"/><rect x="1833" y="161" width="2" height="2"/><rect x="1838" y="161" width="2" height="2"/><rect x="1842" y="161" width="2" height="2"/><rect x="1860" y="161" width="2" height="2"/><rect x="1865" y="161" width="2" height="2"/><rect x="1869" y="161" width="2" height="2"/><rect x="1874" y="161" width="2" height="2"/><rect x="1878" y="161" width="2" height="2"/><rect x="1883" y="161" width="2" height="2"/><rect x="1887" y="161" width="2" height="2"/><rect x="1892" y="161" width="2" height="2"/><rect x="1896" y="161" width="2" height="2"/><rect x="1820" y="166" width="2" height="2"/><rect x="1824" y="166" width="2" height="2"/><rect x="1829" y="166" width="2" height="2"/><rect x="1833" y="166" width="2" height="2"/><rect x="1838" y="166" width="2" height="2"/><rect x="1842" y="166" width="2" height="2"/><rect x="1860" y="166" width="2" height="2"/><rect x="1865" y="166" width="2" height="2"/><rect x="1869" y="166" width="2" height="2"/><rect x="1874" y="166" width="2" height="2"/><rect x="1878" y="166" width="2" height="2"/><rect x="1883" y="166" width="2" height="2"/><rect x="1887" y="166" width="2" height="2"/><rect x="1892" y="166" width="2" height="2"/><rect x="1896" y="166" width="2" height="2"/><rect x="1820" y="171" width="2" height="2"/><rect x="1824" y="171" width="2" height="2"/><rect x="1829" y="171" width="2" height="2"/><rect x="1833" y="171" width="2" height="2"/><rect x="1838" y="171" width="2" height="2"/><rect x="1860" y="171" width="2" height="2"/><rect x="1865" y="171" width="2" height="2"/><rect x="1869" y="171" width="2" height="2"/><rect x="1874" y="171" width="2" height="2"/><rect x="1878" y="171" width="2" height="2"/><rect x="1883" y="171" width="2" height="2"/><rect x="1887" y="171" width="2" height="2"/><rect x="1892" y="171" width="2" height="2"/><rect x="1896" y="171" width="2" height="2"/><rect x="1820" y="175" width="2" height="2"/><rect x="1824" y="175" width="2" height="2"/><rect x="1829" y="175" width="2" height="2"/><rect x="1833" y="175" width="2" height="2"/><rect x="1865" y="175" width="2" height="2"/><rect x="1869" y="175" width="2" height="2"/><rect x="1874" y="175" width="2" height="2"/><rect x="1878" y="175" width="2" height="2"/><rect x="1883" y="175" width="2" height="2"/><rect x="1887" y="175" width="2" height="2"/><rect x="1892" y="175" width="2" height="2"/><rect x="1896" y="175" width="2" height="2"/><rect x="1865" y="180" width="2" height="2"/><rect x="1869" y="180" width="2" height="2"/><rect x="1874" y="180" width="2" height="2"/><rect x="1878" y="180" width="2" height="2"/><rect x="1883" y="180" width="2" height="2"/><rect x="1887" y="180" width="2" height="2"/><rect x="1892" y="180" width="2" height="2"/><rect x="1851" y="185" width="2" height="2"/><rect x="1865" y="185" width="2" height="2"/><rect x="1869" y="185" width="2" height="2"/><rect x="1874" y="185" width="2" height="2"/><rect x="1878" y="185" width="2" height="2"/><rect x="1883" y="185" width="2" height="2"/><rect x="1887" y="185" width="2" height="2"/><rect x="1892" y="185" width="2" height="2"/><rect x="1856" y="190" width="2" height="2"/><rect x="1869" y="190" width="2" height="2"/><rect x="1874" y="190" width="2" height="2"/><rect x="1878" y="190" width="2" height="2"/><rect x="1883" y="190" width="2" height="2"/><rect x="1887" y="190" width="2" height="2"/><rect x="1892" y="190" width="2" height="2"/><rect x="1824" y="194" width="2" height="2"/><rect x="1829" y="194" width="2" height="2"/><rect x="1874" y="194" width="2" height="2"/><rect x="1878" y="194" width="2" height="2"/><rect x="1883" y="194" width="2" height="2"/><rect x="1887" y="194" width="2" height="2"/><rect x="1820" y="199" width="2" height="2"/><rect x="1824" y="199" width="2" height="2"/><rect x="1829" y="199" width="2" height="2"/><rect x="1833" y="199" width="2" height="2"/><rect x="1838" y="199" width="2" height="2"/><rect x="1842" y="199" width="2" height="2"/><rect x="1847" y="199" width="2" height="2"/><rect x="1878" y="199" width="2" height="2"/><rect x="1883" y="199" width="2" height="2"/><rect x="1887" y="199" width="2" height="2"/><rect x="1820" y="204" width="2" height="2"/><rect x="1824" y="204" width="2" height="2"/><rect x="1829" y="204" width="2" height="2"/><rect x="1833" y="204" width="2" height="2"/><rect x="1838" y="204" width="2" height="2"/><rect x="1842" y="204" width="2" height="2"/><rect x="1847" y="204" width="2" height="2"/><rect x="1851" y="204" width="2" height="2"/><rect x="1856" y="204" width="2" height="2"/><rect x="1883" y="204" width="2" height="2"/><rect x="1820" y="209" width="2" height="2"/><rect x="1824" y="209" width="2" height="2"/><rect x="1829" y="209" width="2" height="2"/><rect x="1833" y="209" width="2" height="2"/><rect x="1838" y="209" width="2" height="2"/><rect x="1842" y="209" width="2" height="2"/><rect x="1847" y="209" width="2" height="2"/><rect x="1851" y="209" width="2" height="2"/><rect x="1856" y="209" width="2" height="2"/><rect x="1860" y="209" width="2" height="2"/><rect x="1820" y="213" width="2" height="2"/><rect x="1824" y="213" width="2" height="2"/><rect x="1829" y="213" width="2" height="2"/><rect x="1833" y="213" width="2" height="2"/><rect x="1838" y="213" width="2" height="2"/><rect x="1842" y="213" width="2" height="2"/><rect x="1847" y="213" width="2" height="2"/><rect x="1851" y="213" width="2" height="2"/><rect x="1856" y="213" width="2" height="2"/><rect x="1860" y="213" width="2" height="2"/><rect x="1865" y="213" width="2" height="2"/><rect x="1820" y="218" width="2" height="2"/><rect x="1824" y="218" width="2" height="2"/><rect x="1829" y="218" width="2" height="2"/><rect x="1833" y="218" width="2" height="2"/><rect x="1838" y="218" width="2" height="2"/><rect x="1842" y="218" width="2" height="2"/><rect x="1847" y="218" width="2" height="2"/><rect x="1851" y="218" width="2" height="2"/><rect x="1856" y="218" width="2" height="2"/><rect x="1860" y="218" width="2" height="2"/><rect x="1865" y="218" width="2" height="2"/><rect x="1869" y="218" width="2" height="2"/><rect x="1820" y="223" width="2" height="2"/><rect x="1824" y="223" width="2" height="2"/><rect x="1829" y="223" width="2" height="2"/><rect x="1833" y="223" width="2" height="2"/><rect x="1838" y="223" width="2" height="2"/><rect x="1842" y="223" width="2" height="2"/><rect x="1847" y="223" width="2" height="2"/><rect x="1851" y="223" width="2" height="2"/><rect x="1856" y="223" width="2" height="2"/><rect x="1860" y="223" width="2" height="2"/><rect x="1865" y="223" width="2" height="2"/><rect x="1820" y="228" width="2" height="2"/><rect x="1824" y="228" width="2" height="2"/><rect x="1829" y="228" width="2" height="2"/><rect x="1833" y="228" width="2" height="2"/><rect x="1838" y="228" width="2" height="2"/><rect x="1842" y="228" width="2" height="2"/><rect x="1847" y="228" width="2" height="2"/><rect x="1851" y="228" width="2" height="2"/><rect x="1856" y="228" width="2" height="2"/><rect x="1820" y="232" width="2" height="2"/><rect x="1824" y="232" width="2" height="2"/><rect x="1829" y="232" width="2" height="2"/><rect x="1833" y="232" width="2" height="2"/><rect x="1838" y="232" width="2" height="2"/><rect x="1842" y="232" width="2" height="2"/></g></svg>
</body></html>
